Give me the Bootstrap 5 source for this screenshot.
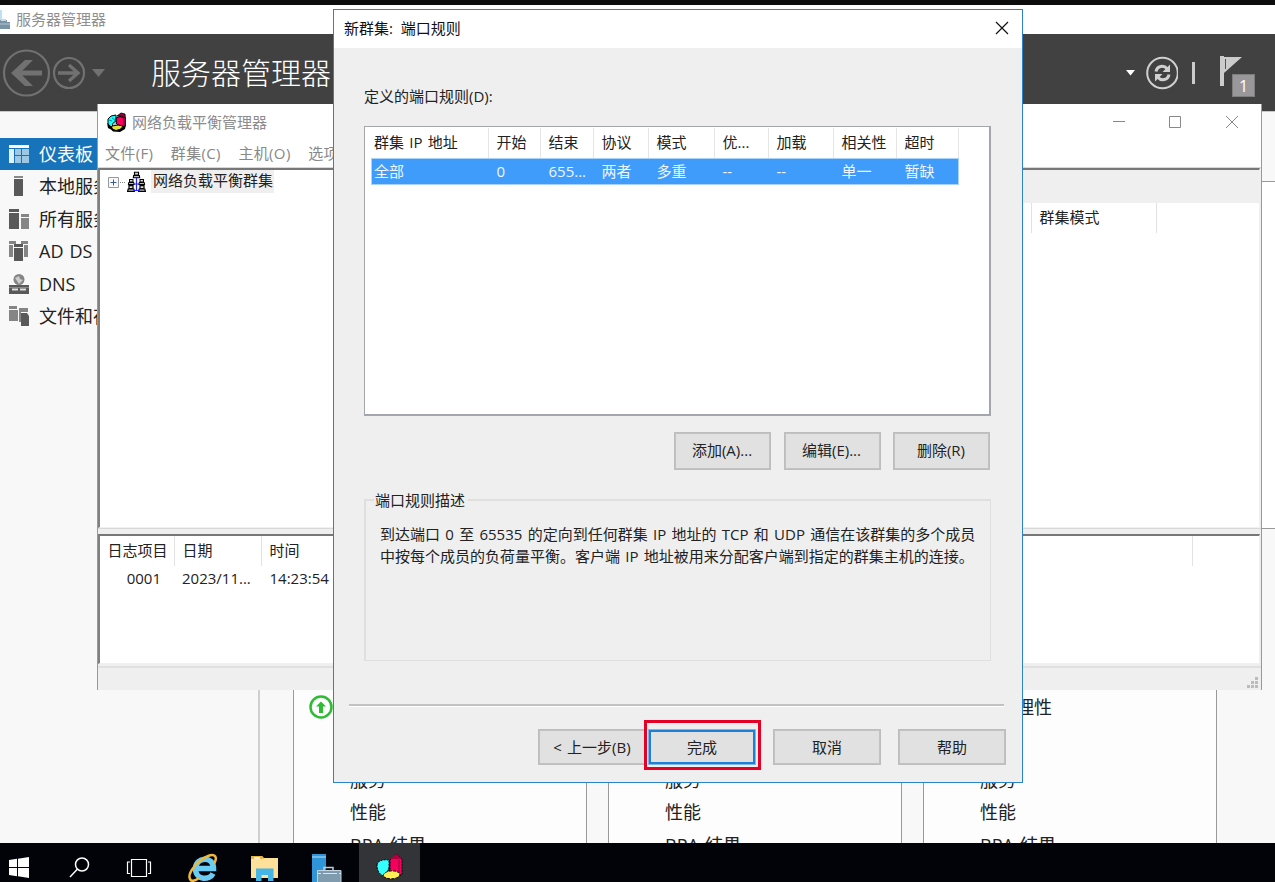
<!DOCTYPE html>
<html lang="zh-CN">
<head>
    <meta charset="UTF-8">
    <title>服务器管理器</title>
    <link href="https://cdn.jsdelivr.net/npm/bootstrap@5.3.0/dist/css/bootstrap.min.css" rel="stylesheet">
    <style>
        body { font-family: "Open Sans", "Noto Sans CJK SC", sans-serif; font-size: 15px; line-height: 20px; color: #222; word-spacing: 1.4px; }
        svg { display: block; flex: none; }
        .desktop { width: 1275px; height: 882px; background: #f8f8f8; white-space: nowrap; }
        .strip { height: 5px; background: #0d0d0d; flex: none; }
        .sm-title { height: 29px; color: #8f8f8f; background: #fff; flex: none; padding-bottom: 1px; }
        .sm-head { height: 77px; background: #414141; flex: none; }
        .sm-head h1 { font-size: 30px; line-height: 40px; font-weight: 300; margin: 1px 0 0 45px; color: #fff; }
        .flag-count { width: 23px; height: 23px; left: 12px; top: 21px; background: #9a979b; border: 1px solid #7d7d7d; color: #fff; line-height: 22px; font-size: 16px; }
        .sm-body { border-top: 1px solid #c8c8c8; min-height: 0; }

        /* left navigation */
        .sidebar { width: 260px; padding-top: 26px; border-right: 2px solid #cfcfcf; }
        .side-item { height: 32.5px; padding-left: 9px; gap: 10px; font-size: 18px; }
        .side-item.current { height: 32px; background: #1874ba; color: #fff; }

        .tiles-wrap { padding: 0 0 0 33px; }
        .top-band { height: 70px; margin-left: -33px; border-bottom: 1px solid #999; }
        .mid-band { height: 347px; margin-left: -33px; background: #fff; border-bottom: 1px solid #999; }
        .tile { width: 294px; height: 330px; margin-right: 21px; background: #fdfdfd; border: 1px solid #999; border-top: 0; font-size: 18px; padding: 150px 0 0 15px; }
        .tile-row { height: 32.5px; padding-left: 41px; }
        .tile-row.first { padding-left: 0; gap: 17px; height: 58px; padding-bottom: 2px; }

        .taskbar { height: 39px; background: #010308; z-index: 1; }
        .task { width: 61px; height: 39px; padding-top: 10px; }
        .task.open { background: #333437; }

        /* load balancing manager window */
        .nlb { left: 97px; top: 104px; width: 1165px; height: 586px; background: #fff; border-left: 1px solid #999; border-right: 1px solid #999; }
        .nlb-title { height: 36px; padding: 0 22px 0 9px; gap: 5px; color: #8c8c8c; }
        .nlb-menu { height: 27px; padding: 3px 0 0 7px; gap: 17.5px; color: #888; letter-spacing: .35px; }
        .nlb-frame { background: #efefef; border-top: 1px solid #d8d8d8; padding-right: 1px; }
        .sunken { border-top: 2px solid #777; border-left: 2px solid #808080; border-right: 1px solid #f0f0f0; border-bottom: 1px solid #f0f0f0; background: #fff; }
        .tree { width: 500px; padding: 0 0 0 8px; }
        .tree-label { background: #efefef; padding: 0 1px 0 2px; height: 23px; line-height: 21px; margin-left: 5px; }
        .pane-right { padding-top: 33px; background: linear-gradient(#efefef 33px, #fff 33px); }
        .list-head > div, .log-head > div { height: 30px; line-height: 28px; border-right: 1px solid #e2e2e2; padding-left: 7.5px; flex: none; }
        .log-row > div { line-height: 26px; margin-top: -1px; }
        .status { height: 24px; background: #efefef; border-top: 2px solid #e0e0e0; padding: 9px 2px 0 0; }

        /* port rules dialog */
        .wizard { left: 333px; top: 9px; width: 690px; height: 774px; background: #efefef; border: 1px solid #2b84c9; z-index: 2; }
        .wizard-title { height: 38px; background: #fff; padding: 0 13px 2px 10px; color: #111; word-spacing: 0; }
        .rules { width: 627px; height: 290px; background: #fff; border: 2px solid #a3a7ad; border-width: 1px 2px 2px 1px; padding: 1px 0 0 6px; }
        .rule-row { display: grid; grid-template-columns: 118px 52px 53px 55px 66px 54px 65px 63px 62px; width: 588px; }
        .rule-row > div { padding-left: 7.5px; height: 27px; line-height: 26px; }
        .rule-row > div:first-child { padding-left: 3px; }
        .rule-row.head > div { height: 30px; line-height: 28px; border-right: 1px solid #e5e5e5; }
        .rule-row.picked { background: #409cfb; color: #eef6ff; outline: 1px solid #a9d3fb; outline-offset: -1px; }
        .wbtn { width: 97px; height: 38px; border: 1px solid #bdbdbd; box-shadow: inset 0 0 0 1px #c2c2c2; border-radius: 0; background: #e1e1e1; font-size: 15px; line-height: 20px; padding: 0 1px 2px 0; color: #222; flex: none; word-spacing: 1.3px; }
        .wbtn.wide { width: 108px; height: 36px; padding: 0 0 1px; }
        .wbtn.default { border: 1px solid #7fb6e6; box-shadow: inset 0 0 0 2px #1d7fd6; }
        .describe { height: 170px; border: 2px solid #dfdfdf; border-width: 2px 1px 1px 2px; padding: 0 0 0 8px; line-height: 21.5px; }
        .describe legend { float: none; width: auto; font-size: 15px; line-height: 18px; height: 18px; padding: 0 3px 0 1px; margin: 0; }
        .describe p { margin: 15px 0 0 6px; }
        .rule-line { height: 3px; margin: 43px 18px 0 15px; background: #c2c2c2; border-bottom: 1px solid #fff; }
        .redbox { left: -4px; top: -9px; width: 117px; height: 50px; border: 3px solid #e60026; }
    </style>
</head>
<body>

<!-- shared icons -->
<svg width="0" height="0" class="position-absolute">
    <symbol id="nlbIcon" viewBox="0 0 20 20">
        <path d="m1 7 3-3 5-1v6l-3 2-1 5-4-4z" fill="#1ff" stroke="#000"/>
        <path d="m10 4 4-3 4 1 .5 5-4-2.500z" fill="#8c0038" stroke="#000" stroke-width=".8"/>
        <path d="m9 6 4-1.500 5.500 1.500v8l-4 1-5-3z" fill="#f5005c" stroke="#000"/>
        <path d="m16 6 2.500.5v7l-2 .8z" fill="#8c0038"/>
        <path d="m5 14 6-1 5 1-2 3-5 1.500-5-2z" fill="#e6e03c" stroke="#000"/>
        <path d="m0 11 5 4 2 4-6-3zM6 19.500l-2-2 6 1 4-2 5-4-1 4.500-5 3z"/>
        <path d="m5 6 3 2v5M2 8l3 1" stroke="#067" fill="none" stroke-width=".7"/>
    </symbol>
    <symbol id="taskNlb" viewBox="0 0 27 28">
        <path d="M1 12c0-4 6-6 12-5v7l-2 7-4 2c-4-2-6-6-6-11z" fill="#3ff" stroke="#000" stroke-dasharray="2 1"/>
        <path d="m14 7 6-6 6 5v16l-6 1-6-4z" fill="#f5005c" stroke="#000" stroke-dasharray="2 1"/>
        <path d="m14 6 6-5 6 5z" fill="#b00040"/>
        <path d="M23 7v15" stroke="#900040"/>
        <path d="M7 23c1-6 14-7 17-2 0 5-12 7-17 2z" fill="#ffee55" stroke="#000" stroke-dasharray="3 1"/>
    </symbol>
    <symbol id="pcNode" viewBox="0 0 8 7">
        <path d="M2 .6h4v3H2z" fill="#ddd" stroke="#000" stroke-width="1.200"/>
        <path d="M1.200 4h5.600L7.400 6.400H.600z" fill="#bbb" stroke="#000" stroke-width="1.200"/>
    </symbol>
</svg>

<div class="desktop position-relative overflow-hidden d-flex flex-column">
    <div class="strip"></div>
    <div class="sm-title d-flex align-items-center">
        <svg width="11" height="20" viewBox="0 0 11 20"><path d="M0 1h2v11H0z" fill="#bde0f2"/><path d="M0 11h7v2h3v7H0z" fill="#7893a6"/><path d="M1 10h5v2H1z" fill="#cdd9e1"/><path d="M0 15h10" stroke="#b5c7d3"/></svg>
        <span style="margin-left:5px">服务器管理器</span>
    </div>
    <div class="sm-head d-flex align-items-center">
        <svg width="106" height="50" viewBox="0 0 106 50" fill="none" stroke="#717171">
            <circle cx="26.500" cy="25" r="22.500" stroke-width="2.200"/>
            <path d="M42 25H17" stroke-width="5"/>
            <path d="M11 25 25 12h8L20 25l13 13h-8z" fill="#717171" stroke="none"/>
            <circle cx="69" cy="25" r="15" stroke-width="2.200"/>
            <path d="M58 25h19M69 17l9 8-9 8" stroke-width="3.300"/>
            <path d="M92 21h13l-6.500 8z" fill="#717171" stroke="none"/>
        </svg>
        <h1>服务器管理器</h1>
        <div class="ms-auto d-flex align-items-center">
            <svg width="10" height="6" viewBox="0 0 10 6"><path d="M0 0h9L4.500 5.500z" fill="#fff"/></svg>
            <svg width="34" height="34" viewBox="0 0 34 34" class="ms-2" fill="none" stroke="#d0d0d0">
                <g transform="translate(3 0)"><circle cx="15.500" cy="17" r="15.300" stroke-width="2"/>
                <path d="M9 15.500c1-6 8-6.500 11-3M22 18.500c-1 6-8 6.500-11 3" stroke-width="3"/>
                <path d="M23 8.500v7.500h-7.500zM8 25.500V18h7.500z" fill="#d0d0d0" stroke="none"/></g>
            </svg>
            <div class="bg-light opacity-75" style="width:3px;height:22px;margin-left:14px"></div>
            <div class="position-relative" style="width:55px;height:40px;margin-left:25px">
                <svg width="24" height="32" viewBox="0 0 24 32" style="margin-top:3px"><path d="M0 0h4v30H0z" fill="#ccc"/><path d="M4 1h18L4 17z" fill="#ccc"/><path d="M5.500 3v10" stroke="#555"/></svg>
                <div class="flag-count position-absolute text-center">1</div>
            </div>
        </div>
    </div>

    <div class="sm-body d-flex flex-grow-1 overflow-hidden" style="flex-basis:0">
        <div class="sidebar flex-shrink-0">
            <div class="side-item current d-flex align-items-center">
                <svg width="20" height="20"><path d="M0 1h20v3H0z" fill="#fff"/><path d="M0 5h5v14H0z" fill="#e2f0f9"/><path d="M6 5h6v6H6zM6 12h6v7H6zM13 5h7v6h-7zM13 12h7v7h-7z" fill="#9cc8e6"/></svg>
                仪表板
            </div>
            <div class="side-item d-flex align-items-center">
                <svg width="20" height="20"><path d="M5 0h9v2H5z" fill="#888"/><path d="M5 3h9v17H5z" fill="#595959"/></svg>
                本地服务器
            </div>
            <div class="side-item d-flex align-items-center">
                <svg width="20" height="20"><path d="M0 0h10v3H0zM0 4h10v16H0z" fill="#595959"/><path d="M12 5h8v3h-8zM12 9h8v11h-8z" fill="#858585"/></svg>
                所有服务器
            </div>
            <div class="side-item d-flex align-items-center">
                <svg width="20" height="20"><path d="M0 0h7v3H0zM12 0h7v3h-7zM0 4h4v12H0zM15 4h4v12h-4z" fill="#858585"/><path d="M5 3h9v3H5zM5 7h9v13H5z" fill="#595959"/></svg>
                AD DS
            </div>
            <div class="side-item d-flex align-items-center">
                <svg width="20" height="20"><circle cx="10" cy="5.500" r="5.500" fill="#858585"/><path d="m6 4 4-2 1 3 3 1-4 4-2-3z" fill="#ccc"/><path d="M0 11h20v9H0z" fill="#595959"/><path d="M3 15.500h6M11 15.500h6" stroke="#ddd" stroke-width="2"/><path d="M0 13.500h20" stroke="#888"/></svg>
                DNS
            </div>
            <div class="side-item d-flex align-items-center">
                <svg width="20" height="20"><path d="M0 0h8v3H0zM0 4h9v11H0zM10 2h9v4h-9zM10 6h2v10h-2z" fill="#858585"/><path d="M12 7h6l2 3v10h-8z" fill="#595959"/></svg>
                文件和存储服务
            </div>
        </div>
        <div class="flex-grow-1 tiles-wrap">
            <div class="top-band"></div>
            <div class="mid-band"></div>
            <div class="d-flex">
                <div class="tile flex-shrink-0">
                    <div class="tile-row first d-flex align-items-center">
                        <svg width="24" height="24" fill="none" stroke="#2dbd35"><circle cx="12" cy="12" r="10.500" stroke-width="2.500"/><path d="m7 11.500 5-5 5 5h-3v6.500h-4v-6.500z" fill="#2dbd35" stroke="none"/></svg>
                    </div>
                    <div class="tile-row"></div>
                    <div class="tile-row">服务</div>
                    <div class="tile-row">性能</div>
                    <div class="tile-row">BPA 结果</div>
                </div>
                <div class="tile flex-shrink-0">
                    <div class="tile-row first"></div>
                    <div class="tile-row"></div>
                    <div class="tile-row">服务</div>
                    <div class="tile-row">性能</div>
                    <div class="tile-row">BPA 结果</div>
                </div>
                <div class="tile flex-shrink-0">
                    <div class="tile-row first d-flex align-items-center">
                        <svg width="24" height="24" fill="none" stroke="#2dbd35"><circle cx="12" cy="12" r="10.500" stroke-width="2.500"/></svg>
                        可管理性
                    </div>
                    <div class="tile-row"></div>
                    <div class="tile-row">服务</div>
                    <div class="tile-row">性能</div>
                    <div class="tile-row">BPA 结果</div>
                </div>
            </div>
        </div>
    </div>

    <!-- Taskbar -->
    <div class="taskbar d-flex flex-shrink-0">
        <div class="task ps-2"><svg width="22" height="28" viewBox="0 0 22 28"><path d="m1 7 8-1.200V14H1zM10 5.700 21 4v10H10zM1 15h8v8.200L1 22zM10 15h11v10l-11-1.700z" fill="#fff"/></svg></div>
        <div class="task ps-2"><svg width="22" height="28" fill="none" stroke="#fff" stroke-width="1.500"><circle cx="13" cy="11.500" r="6.500"/><path d="M8.500 16 1 24"/></svg></div>
        <div class="task ps-1"><svg width="26" height="28" fill="none" stroke="#fff" stroke-width="1.200"><path d="M5.500 6.500h15v17h-15zM4 9H1.500v11.500H4M22 9h2.500v11.500H22"/></svg></div>
        <div class="task ps-1">
            <svg width="32" height="29" viewBox="0 0 32 29" fill="none">
                <path d="M26 20.500c-3 6.500-17 7.500-17.500-4.500C8.500 3.500 26.500 2.500 26.500 15.500H11" stroke="#6accf3" stroke-width="5.500"/>
                <path d="M27 11c4-7 1-11-6-8C11 7 0 20 3 26c1 3 5 2 9-1" stroke="#efb83c" stroke-width="2.500"/>
            </svg>
        </div>
        <div class="task ps-1">
            <svg width="32" height="29"><path d="M3 3h11l2 2h14v20H3z" fill="#fde09a"/><path d="M3 3h11l2 3H3z" fill="#ecb63e"/><path d="M6 5h6" stroke="#fff" stroke-width="1.500"/><path d="M8 28V15.500h17.500V28H20v-6h-6.500v6z" fill="#45b4e6"/></svg>
        </div>
        <div class="task ps-1">
            <svg width="34" height="29"><path d="M3 1h14v28H3z" fill="#2f94d8"/><path d="M3 4h14" stroke="#b8e0f6"/><path d="M15 17v-2.500h9V17" stroke="#b9ced9" stroke-width="1.500" fill="none"/><path d="M8.500 17.500H32v12H8.500z" fill="#7f9bad" stroke="#c2d3dd"/><path d="M9 20.500h3M14 20.500h14M30 20.500h2" stroke="#dce7ed"/></svg>
        </div>
        <div class="task open" style="margin-left:-7px;padding-left:17px"><svg width="27" height="28"><use href="#taskNlb"/></svg></div>
    </div>

    <!-- Network load balancing manager -->
    <div class="nlb position-absolute d-flex flex-column">
        <div class="nlb-title d-flex align-items-center">
            <svg width="20" height="20"><use href="#nlbIcon"/></svg>
            <span>网络负载平衡管理器</span>
            <svg class="ms-auto" width="126" height="14" fill="none" stroke="#888"><path d="M0 6.500h12M56.500 1.500h11v11h-11zM113 1l12 12M125 1l-12 12"/></svg>
        </div>
        <div class="nlb-menu d-flex">
            <span>文件(F)</span><span>群集(C)</span><span>主机(O)</span><span>选项(N)</span>
        </div>
        <div class="nlb-frame d-flex" style="height:361px">
            <div class="sunken tree">
                <div class="d-flex align-items-start">
                    <svg width="38" height="24">
                        <path d="M.5 7.500h10v10H.5z" fill="#f8f8f8" stroke="#999"/><path d="M2.500 12.500h6M5.500 9.500v6" stroke="#3b5a9d"/>
                        <path d="M12 12.500h6" stroke="#888" stroke-dasharray="1 1"/>
                        <use href="#pcNode" x="24.500" y="1.500" width="8" height="7"/>
                        <use href="#pcNode" x="19.500" y="9" width="7.500" height="6"/>
                        <use href="#pcNode" x="30" y="9" width="7.500" height="6"/>
                        <use href="#pcNode" x="19" y="15" width="8" height="7"/>
                        <use href="#pcNode" x="30" y="15" width="8" height="7"/>
                        <path d="M28.500 8v13M26 20.500h5M26 14h5" stroke="#22f" stroke-width="1.200" fill="none"/>
                    </svg>
                    <span class="tree-label">网络负载平衡群集</span>
                </div>
            </div>
            <div class="sunken pane-right flex-grow-1 border-start-0">
                <div class="list-head d-flex">
                    <div style="width:434px">主机</div>
                    <div style="width:125px">群集模式</div>
                </div>
            </div>
        </div>
        <div class="nlb-frame d-flex flex-grow-1" style="padding:5px 1px 2px 0">
            <div class="sunken flex-grow-1">
                <div class="log-head d-flex">
                    <div style="width:75px">日志项目</div>
                    <div style="width:87px">日期</div>
                    <div style="width:931px">时间</div>
                </div>
                <div class="d-flex log-row">
                    <div class="text-end" style="width:61px">0001</div>
                    <div style="width:88px;padding-left:21px">2023/11...</div>
                    <div style="padding-left:20.5px">14:23:54</div>
                </div>
            </div>
        </div>
        <div class="status d-flex justify-content-end">
            <svg width="12" height="12" fill="#bbb"><path d="M8 0h3v3H8zM4 4h3v3H4zM8 4h3v3H8zM0 8h3v3H0zM4 8h3v3H4zM8 8h3v3H8z"/></svg>
        </div>
    </div>

    <!-- Port rules -->
    <div class="wizard position-absolute">
        <div class="wizard-title d-flex align-items-center justify-content-between">
            <span>新群集:&nbsp; 端口规则</span>
            <svg width="14" height="14" stroke="#111" stroke-width="1.200"><path d="m1 1 12 12M13 1 1 13"/></svg>
        </div>
        <div style="padding:38px 31px 0 30px">
            <div>定义的端口规则(D):</div>
            <div class="rules" style="margin-top:20px">
                <div class="rule-row head">
                    <div>群集 IP 地址</div><div>开始</div><div>结束</div><div>协议</div><div>模式</div><div>优...</div><div>加载</div><div>相关性</div><div>超时</div>
                </div>
                <div class="rule-row picked">
                    <div>全部</div><div>0</div><div>655...</div><div>两者</div><div>多重</div><div>--</div><div>--</div><div>单一</div><div>暂缺</div>
                </div>
            </div>
            <div class="d-flex justify-content-end" style="gap:12.5px;margin:16px 1px 0 0">
                <button class="btn wbtn">添加(A)...</button>
                <button class="btn wbtn">编辑(E)...</button>
                <button class="btn wbtn">删除(R)</button>
            </div>
            <fieldset class="describe" style="margin-top:21px">
                <legend>端口规则描述</legend>
                <p>到达端口 0 至 65535 的定向到任何群集 IP 地址的 TCP 和 UDP 通信在该群集的多个成员<br>中按每个成员的负荷量平衡。客户端 IP 地址被用来分配客户端到指定的群集主机的连接。</p>
            </fieldset>
        </div>
        <div class="rule-line"></div>
        <div class="d-flex justify-content-end" style="padding:22px 16px 0 0">
            <button class="btn wbtn wide">&lt; 上一步(B)</button>
            <div class="position-relative" style="margin:0 17px 0 2px">
                <button class="btn wbtn wide default">完成</button>
                <div class="redbox position-absolute"></div>
            </div>
            <button class="btn wbtn wide">取消</button>
            <button class="btn wbtn wide" style="margin-left:17px">帮助</button>
        </div>
    </div>
</div>

<script src="https://cdn.jsdelivr.net/npm/bootstrap@5.3.0/dist/js/bootstrap.bundle.min.js"></script>
</body>
</html>
